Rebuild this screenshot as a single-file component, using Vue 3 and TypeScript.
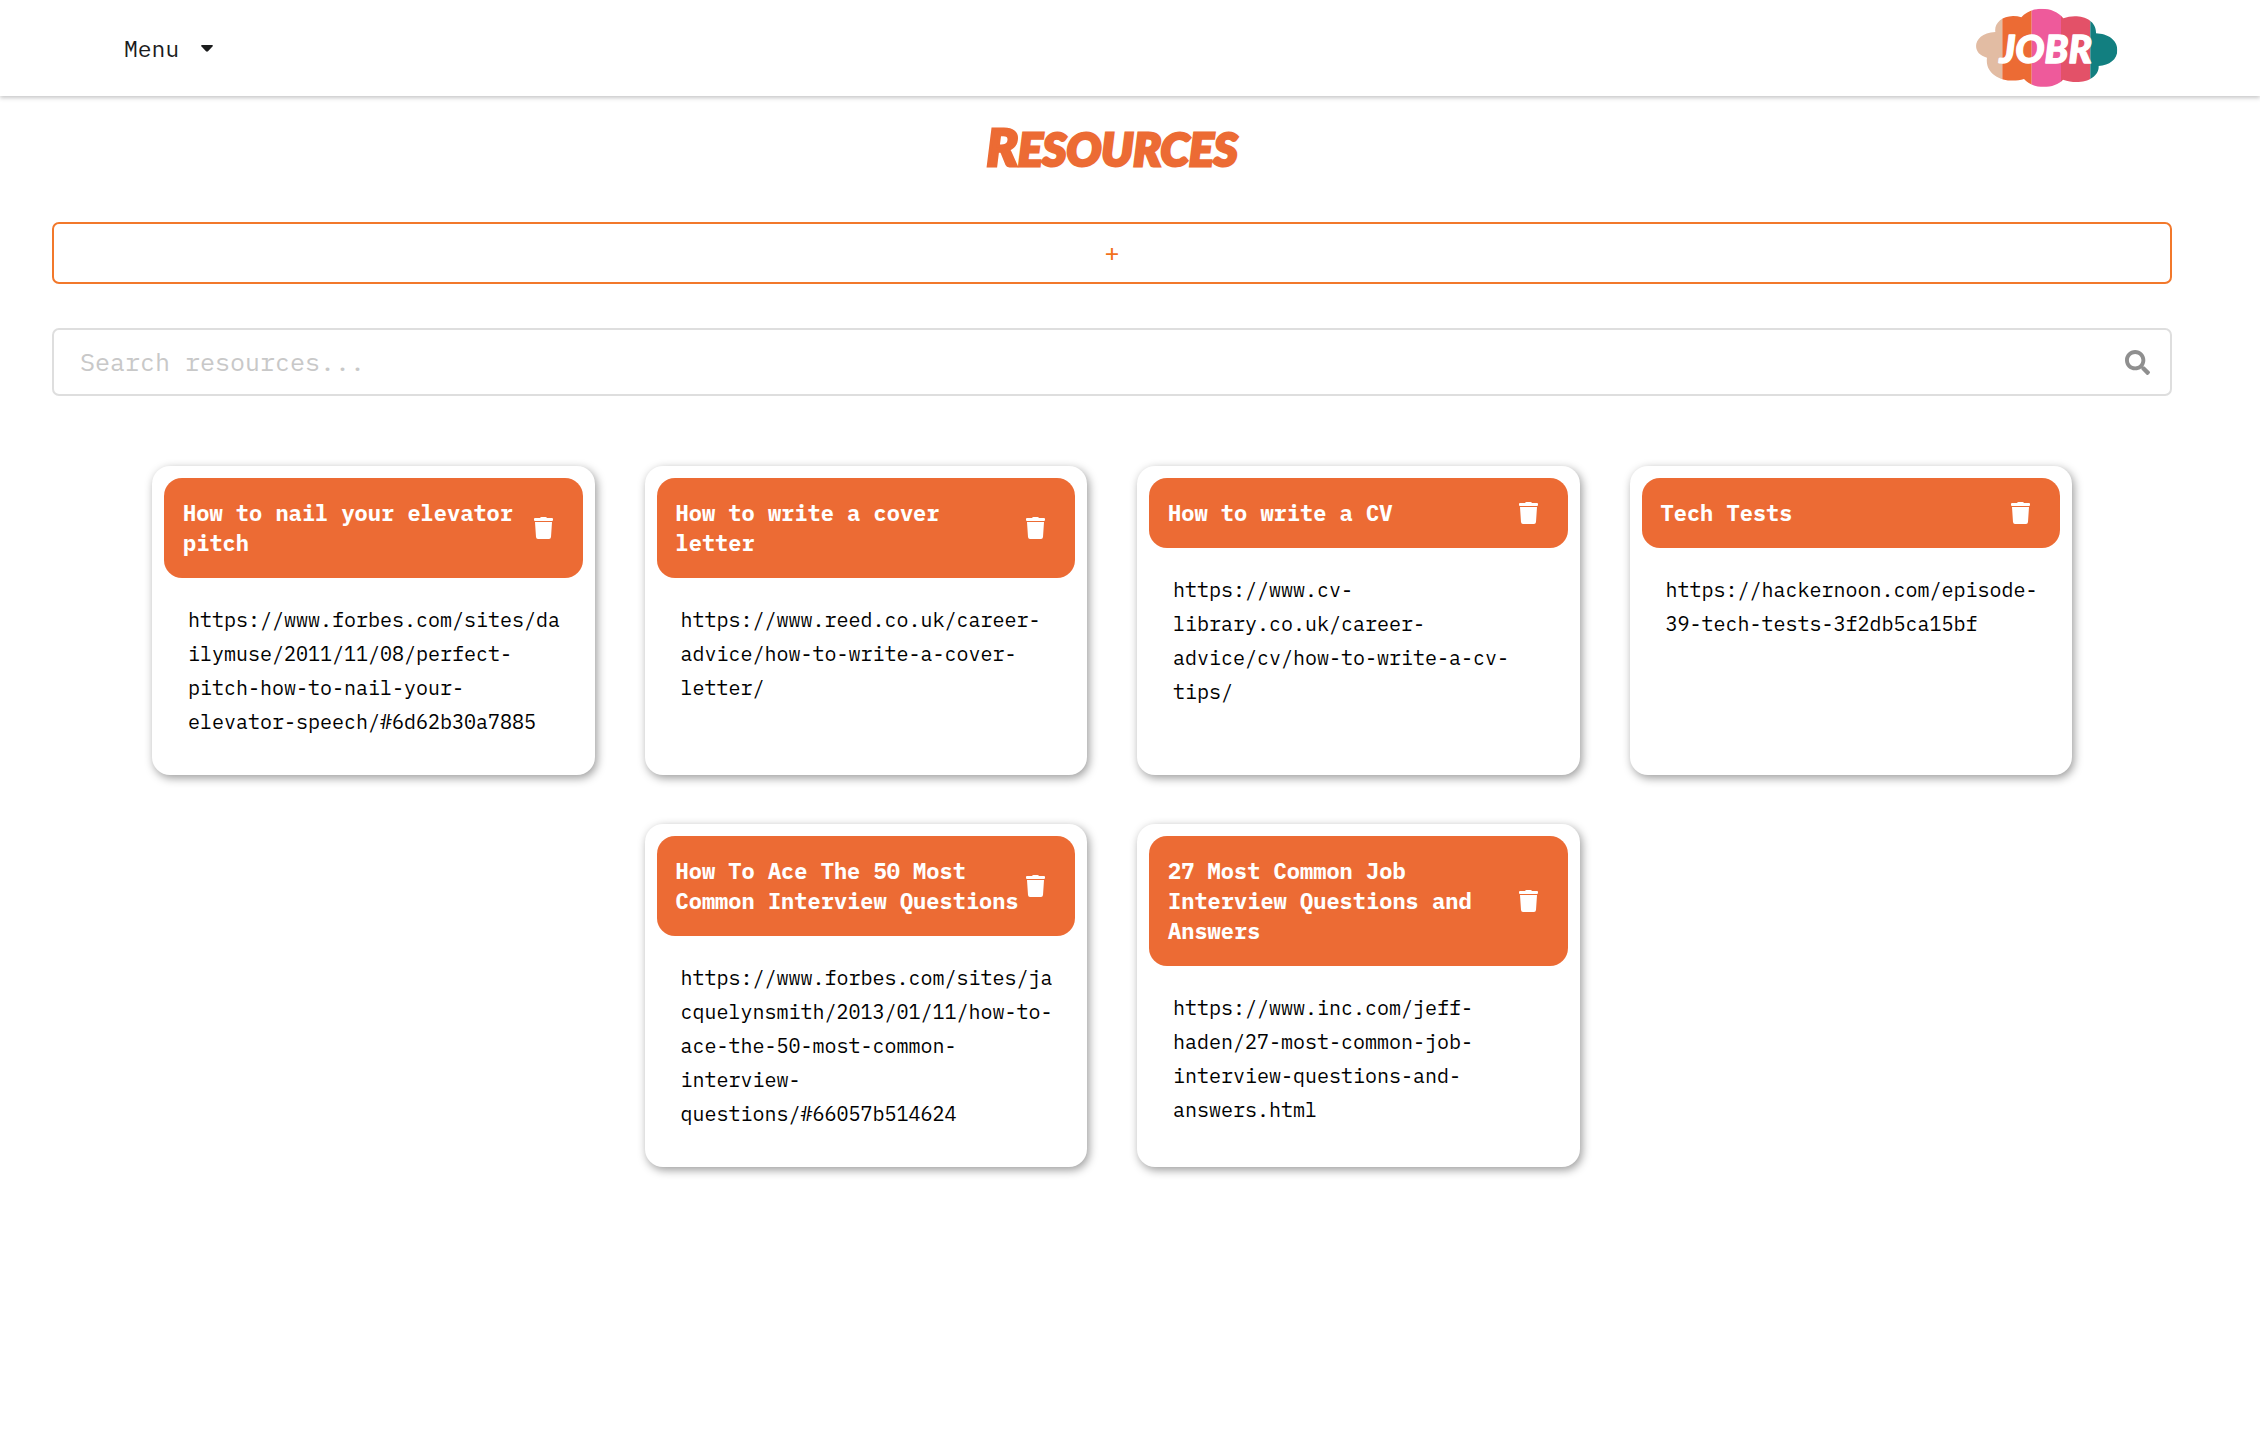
<script setup lang="ts">
import { computed, ref } from 'vue'

interface Resource {
  title: string
  url: string
}

const resources = ref<Resource[]>([
  {
    title: 'How to nail your elevator pitch',
    url: 'https://www.forbes.com/sites/dailymuse/2011/11/08/perfect-pitch-how-to-nail-your-elevator-speech/#6d62b30a7885',
  },
  {
    title: 'How to write a cover letter',
    url: 'https://www.reed.co.uk/career-advice/how-to-write-a-cover-letter/',
  },
  {
    title: 'How to write a CV',
    url: 'https://www.cv-library.co.uk/career-advice/cv/how-to-write-a-cv-tips/',
  },
  {
    title: 'Tech Tests',
    url: 'https://hackernoon.com/episode-39-tech-tests-3f2db5ca15bf',
  },
  {
    title: 'How To Ace The 50 Most Common Interview Questions',
    url: 'https://www.forbes.com/sites/jacquelynsmith/2013/01/11/how-to-ace-the-50-most-common-interview-questions/#66057b514624',
  },
  {
    title: '27 Most Common Job Interview Questions and Answers',
    url: 'https://www.inc.com/jeff-haden/27-most-common-job-interview-questions-and-answers.html',
  },
])

const query = ref('')

const visible = computed(() =>
  resources.value.filter((r) => r.title.toLowerCase().includes(query.value.toLowerCase())),
)

function remove(resource: Resource) {
  resources.value = resources.value.filter((r) => r !== resource)
}
</script>

<template>
  <div class="page">
    <header class="nav">
      <button class="menu" type="button" aria-haspopup="menu">
        Menu
        <svg class="caret" viewBox="0 0 12 7" aria-hidden="true">
          <path d="M1 0H11Q12.500 .2 11.500 1.400L7 6.300Q6 7.200 5 6.300L.5 1.400Q-.5 .2 1 0Z" fill="currentColor" />
        </svg>
      </button>
      <a class="brand" href="#" aria-label="JOBR home">
        <svg class="logo" viewBox="105 25 429 240">
          <defs>
            <clipPath id="cloud">
              <path
                d="M166 97C162 72 184 50 219 49Q233 49 244 53C272 18 342 18 370 56C412 40 470 55 468 101C502 102 532 120 532 151C532 180 508 197 476 199C478 236 424 260 369 240C345 268 278 270 252 238C200 254 133 230 141 174C92 164 96 100 166 97Z"
              />
            </clipPath>
          </defs>
          <g clip-path="url(#cloud)">
            <rect x="100" y="20" width="87" height="250" fill="#e2bca3" />
            <rect x="187" y="20" width="88" height="250" fill="#ec6b34" />
            <rect x="275" y="20" width="88" height="250" fill="#ee5a9b" />
            <rect x="363" y="20" width="88" height="250" fill="#e35168" />
            <rect x="451" y="20" width="90" height="250" fill="#127f80" />
          </g>
          <text class="logo-text" x="317" y="191" text-anchor="middle">JOBR</text>
        </svg>
      </a>
    </header>

    <main class="content">
      <h1 class="heading">Resources</h1>

      <button class="add" type="button" aria-label="Add resource">+</button>

      <label class="search">
        <input v-model="query" class="search-input" type="text" placeholder="Search resources..." aria-label="Search resources" />
        <svg class="search-icon" viewBox="0 0 512 512" aria-hidden="true">
          <path
            fill="currentColor"
            d="M505 442.700L405.300 343c-4.500-4.500-10.600-7-17-7H372c27.600-35.300 44-79.700 44-128C416 93.100 322.900 0 208 0S0 93.100 0 208s93.100 208 208 208c48.300 0 92.700-16.400 128-44v16.300c0 6.400 2.500 12.500 7 17l99.700 99.700c9.400 9.400 24.600 9.400 33.900 0l28.300-28.300c9.400-9.400 9.400-24.600.1-34zM208 336c-70.700 0-128-57.200-128-128 0-70.700 57.200-128 128-128 70.700 0 128 57.200 128 128 0 70.700-57.200 128-128 128z"
          />
        </svg>
      </label>

      <section class="cards">
        <article v-for="resource in visible" :key="resource.url" class="card">
          <div class="card-head">
            <h2 class="card-title">{{ resource.title }}</h2>
            <button class="trash" type="button" :aria-label="`Delete ${resource.title}`" @click="remove(resource)">
              <svg class="trash-icon" viewBox="0 0 19 22" aria-hidden="true">
                <path
                  fill="currentColor"
                  d="M1 1H6Q6.500 0 7.500 0H11.500Q12.500 0 13 1H18Q19 1 19 2V3Q19 4 18 4H1Q0 4 0 3V2Q0 1 1 1ZM1 5H18L17 20Q16.800 22 15 22H4Q2.200 22 2 20Z"
                />
              </svg>
            </button>
          </div>
          <a class="card-link" :href="resource.url">{{ resource.url }}</a>
        </article>
      </section>
    </main>
  </div>
</template>

<style>
body {
  margin: 0;
  background: #fff;
}
</style>

<style scoped>
.page {
  font-family: "IBM Plex Mono", "Liberation Mono", monospace;
  color: #000;
}

.page * {
  box-sizing: border-box;
}

button {
  font-family: inherit;
  background: none;
  border: 0;
  padding: 0;
  cursor: pointer;
}

.nav {
  display: flex;
  align-items: center;
  justify-content: space-between;
  height: 96px;
  padding: 0 142px 0 124px;
  background: #fff;
  box-shadow: 0 2px 4px rgba(34, 36, 38, 0.25);
}

.menu {
  display: flex;
  align-items: center;
  gap: 22px;
  font-size: 23px;
  line-height: 30px;
  color: #1b1c1d;
}

.caret {
  width: 12px;
  height: 7px;
}

.logo {
  display: block;
  width: 143px;
  height: 80px;
}

.logo-text {
  font-family: Lato, sans-serif;
  font-size: 116px;
  font-weight: 900;
  font-style: italic;
  fill: #fff;
  stroke: #fff;
  stroke-width: 4px;
  stroke-linejoin: round;
}

.content {
  padding: 20px 88px 48px 52px;
}

.heading {
  margin: 0 0 43px;
  font-family: Lato, sans-serif;
  font-size: 46px;
  line-height: 60px;
  font-weight: 900;
  font-style: italic;
  text-align: center;
  text-transform: uppercase;
  color: #ec6b34;
  -webkit-text-stroke: 3px #ec6b34;
}

.heading::first-letter {
  font-size: 52px;
}

.add {
  display: block;
  width: 100%;
  height: 62px;
  border: 2px solid #f2782b;
  border-radius: 7px;
  font-size: 25px;
  line-height: 30px;
  color: #f2711c;
}

.search {
  display: flex;
  align-items: center;
  height: 68px;
  margin-top: 44px;
  padding: 0 20px 0 26px;
  border: 2px solid #dedede;
  border-radius: 7px;
}

.search-input {
  flex: 1;
  min-width: 0;
  padding: 0;
  border: 0;
  outline: 0;
  background: none;
  font-family: inherit;
  font-size: 25px;
  line-height: 32px;
  color: #000;
}

.search-input::placeholder {
  color: #c8c8c8;
  opacity: 1;
}

.search-icon {
  width: 25px;
  height: 25px;
  color: #8f8f8f;
}

.cards {
  display: flex;
  flex-wrap: wrap;
  justify-content: center;
  gap: 49px 50px;
  padding: 70px 100px 0;
}

.card {
  flex: 0 0 calc((100% - 150px) / 4);
  min-width: 0;
  padding: 12px 12px 36px;
  border-radius: 18px;
  background: #fff;
  box-shadow: 2px 3px 10px rgba(0, 0, 0, 0.4);
}

.card-head {
  display: flex;
  align-items: center;
  padding: 20px 30px 20px 19px;
  border-radius: 18px;
  background: #ec6b34;
  color: #fff;
}

.card-title {
  flex: 1;
  min-width: 0;
  margin: 0;
  font-size: 22px;
  line-height: 30px;
  font-weight: 700;
}

.trash {
  flex: none;
  color: #fff;
}

.trash-icon {
  display: block;
  width: 19px;
  height: 22px;
}

.card-link {
  display: block;
  margin: 25px 18px 0 24px;
  font-size: 20px;
  line-height: 34px;
  color: #000;
  text-decoration: none;
  overflow-wrap: break-word;
}
</style>
